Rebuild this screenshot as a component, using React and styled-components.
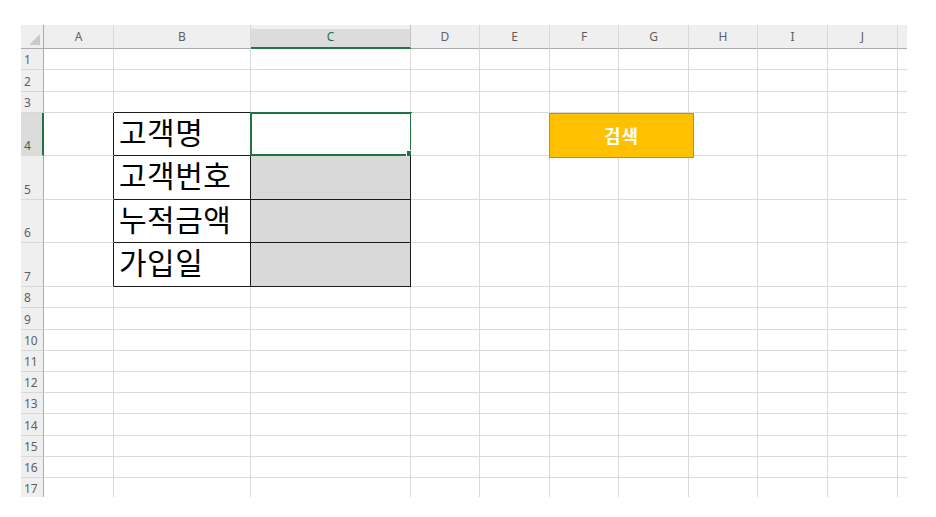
import React from "react";
import styled, { createGlobalStyle, css } from "styled-components";

const GlobalStyle = createGlobalStyle`
  html, body { margin: 0; padding: 0; background: #ffffff; }
  body { font-family: "Noto Sans CJK KR", "Noto Sans", sans-serif; }
  * { box-sizing: border-box; }
`;

const COLS = ["A", "B", "C", "D", "E", "F", "G", "H", "I", "J", ""];
const COL_W = [70, 137, 160, 69, 70, 69, 70, 69, 70, 70, 20];
const ROW_H = [21, 22, 21, 43, 44, 43, 44, 21, 22, 21, 21, 21, 21, 22, 21, 21, 21];
const LABELS = { 4: "고객명", 5: "고객번호", 6: "누적금액", 7: "가입일" };
const GRID = "#dadada";
const INK = "#1a1a1a";
const GREEN = "#217346";

const Sheet = styled.div`
  position: relative;
  margin: 25px 0 0 21px;
  width: 886px;
  height: 472px;
  overflow: hidden;
  display: grid;
  grid-template-columns: 23px ${COL_W.map((w) => `${w}px`).join(" ")};
  grid-template-rows: 24px ${ROW_H.map((h) => `${h}px`).join(" ")};
`;

const Corner = styled.div`
  position: relative;
  background: #efefef;
  border-right: 1px solid #ababab;
  border-bottom: 1px solid #ababab;
  &::after {
    content: "";
    position: absolute;
    right: 3px;
    bottom: 3px;
    width: 0;
    height: 0;
    border-left: 11px solid transparent;
    border-bottom: 11px solid #c9c9c9;
  }
`;

const ColHeader = styled.div`
  display: flex;
  align-items: center;
  justify-content: center;
  font-family: "Noto Sans", "Liberation Sans", sans-serif;
  font-size: 12px;
  color: #5f5f5f;
  background: #efefef;
  border-bottom: 1px solid #ababab;
  border-right: 1px solid #d8d8d8;
  ${(p) =>
    p.$selected &&
    css`
      background: linear-gradient(#efefef 0 4px, #dcdcdc 4px);
      color: ${GREEN};
      border-bottom: 2px solid ${GREEN};
      border-right-color: #c4c4c4;
    `}
`;

const RowHeader = styled.div`
  display: flex;
  align-items: flex-end;
  padding: 0 0 3px 3px;
  font-family: "Noto Sans", "Liberation Sans", sans-serif;
  font-size: 12px;
  line-height: 13px;
  color: #5f5f5f;
  background: #efefef;
  border-right: 1px solid #ababab;
  border-bottom: 1px solid #d8d8d8;
  ${(p) =>
    p.$selected &&
    css`
      background: #dcdcdc;
      color: ${GREEN};
      border-right: 2px solid ${GREEN};
    `}
`;

const Cell = styled.div`
  position: relative;
  display: flex;
  align-items: center;
  padding: 0 0 7px 5px;
  background: ${(p) => p.$fill || "#ffffff"};
  border-right: 1px solid ${(p) => p.$right};
  border-bottom: 1px solid ${(p) => p.$bottom};
  font-size: 30px;
  line-height: 34px;
  letter-spacing: 0.5px;
  color: #000000;
  white-space: nowrap;
`;

const Selection = styled.div`
  position: absolute;
  left: -1px;
  top: -1px;
  right: -2px;
  bottom: -1px;
  border: 2px solid ${GREEN};
  pointer-events: none;
  &::after {
    content: "";
    position: absolute;
    right: -4px;
    bottom: -4px;
    width: 6px;
    height: 6px;
    background: ${GREEN};
    border: 1px solid #ffffff;
  }
`;

const SearchButton = styled.div`
  position: absolute;
  left: 528px;
  top: 88px;
  width: 145px;
  height: 45px;
  display: flex;
  align-items: center;
  justify-content: center;
  padding-bottom: 2px;
  background: #ffc000;
  border: 1px solid #c29400;
  color: #ffffff;
  font-family: "Noto Sans CJK KR", sans-serif;
  font-weight: 700;
  font-size: 18px;
  letter-spacing: 1px;
`;

const inBox = (r, c) => r >= 4 && r <= 7 && (c === 1 || c === 2);

export default function App() {
  const cells = [];
  cells.push(<Corner key="corner" />);
  COLS.forEach((name, c) => {
    cells.push(
      <ColHeader key={`h${c}`} $selected={c === 2}>
        {name}
      </ColHeader>
    );
  });
  ROW_H.forEach((_, i) => {
    const r = i + 1;
    cells.push(
      <RowHeader key={`r${r}`} $selected={r === 4}>
        {r}
      </RowHeader>
    );
    COLS.forEach((_, c) => {
      const boxed = inBox(r, c);
      const right = boxed || inBox(r, c + 1) ? INK : GRID;
      const bottom = boxed || inBox(r + 1, c) ? INK : GRID;
      const fill = boxed && c === 2 && r > 4 ? "#d9d9d9" : undefined;
      cells.push(
        <Cell
          key={`c${r}-${c}`}
          $right={right}
          $bottom={bottom}
          $fill={fill}
        >
          {c === 1 && LABELS[r]}
          {c === 2 && r === 4 && <Selection />}
        </Cell>
      );
    });
  });

  return (
    <>
      <GlobalStyle />
      <Sheet>
        {cells}
        <SearchButton>검색</SearchButton>
      </Sheet>
    </>
  );
}
